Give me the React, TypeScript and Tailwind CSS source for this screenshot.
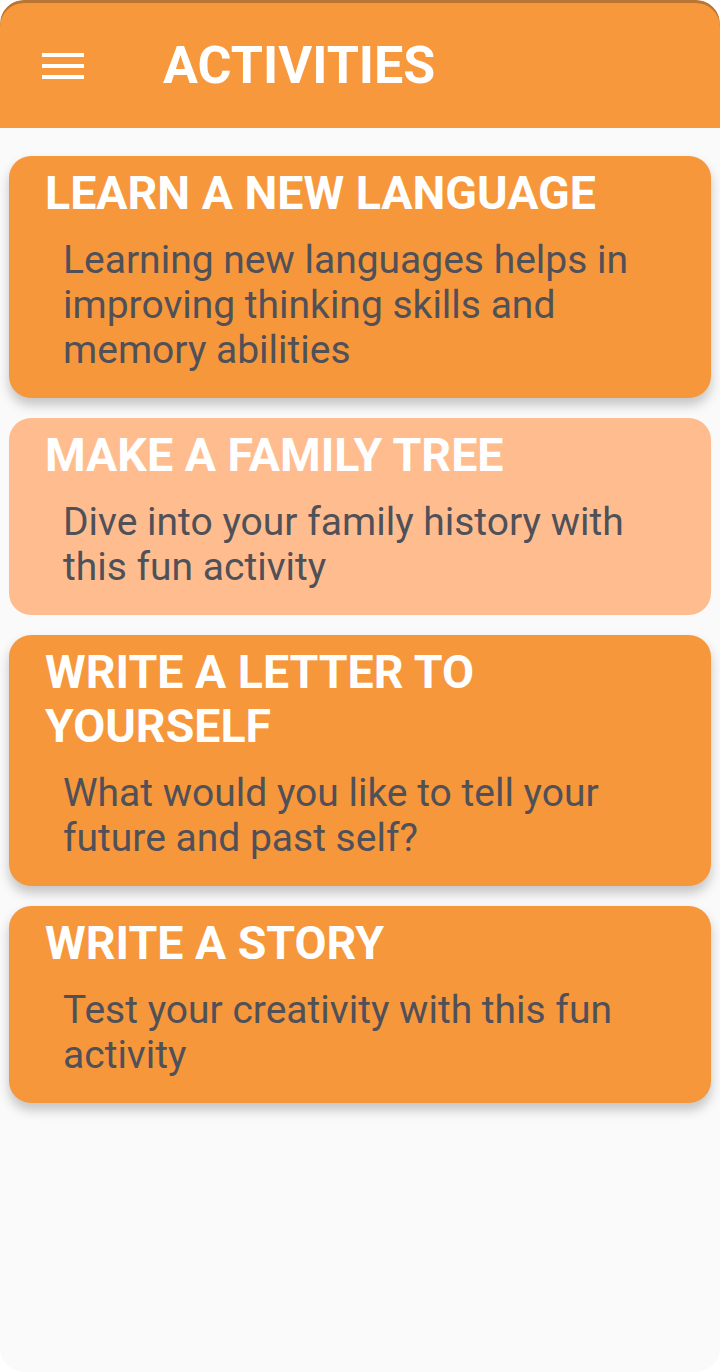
const activities = [
  {
    title: "LEARN A NEW LANGUAGE",
    text: "Learning new languages helps in improving thinking skills and memory abilities",
    light: false,
  },
  {
    title: "MAKE A FAMILY TREE",
    text: "Dive into your family history with this fun activity",
    light: true,
  },
  {
    title: "WRITE A LETTER TO YOURSELF",
    text: "What would you like to tell your future and past self?",
    light: false,
  },
  {
    title: "WRITE A STORY",
    text: "Test your creativity with this fun activity",
    light: false,
  },
];

function ActivityCard({ title, text, light }: { title: string; text: string; light: boolean }) {
  return (
    <div
      className={
        light
          ? "rounded-[22px] bg-[#ffbd8f] pt-[10px] pb-[25px] pl-[36px] pr-[30px]"
          : "rounded-[22px] bg-[#f7973b] pt-[10px] pb-[25px] pl-[36px] pr-[30px] shadow-[0_7px_12px_rgba(0,0,0,0.22)]"
      }
    >
      <h2 className="text-[46.5px] font-bold leading-[54px] text-white">{title}</h2>
      <p className="mt-[18px] pl-[18px] text-[39px] leading-[45px] text-[#505058]">{text}</p>
    </div>
  );
}

export default function App() {
  return (
    <div className="bg-white" style={{ fontFamily: "Roboto, 'Liberation Sans', sans-serif" }}>
      <div className="h-[1372px] overflow-hidden rounded-[24px] bg-[#fafafa]">
        <header className="flex h-[128px] items-start rounded-t-[24px] bg-[#f7983c] pt-[35px] shadow-[inset_0_3px_0_#b97533]">
          <button className="ml-[42px] mt-[18px] flex w-[42px] flex-col gap-[7px]">
            <span className="block h-[4px] w-full bg-white" />
            <span className="block h-[4px] w-full bg-white" />
            <span className="block h-[4px] w-full bg-white" />
          </button>
          <h1 className="ml-[79px] text-[52px] font-bold leading-[61px] text-white">ACTIVITIES</h1>
        </header>

        <main className="flex flex-col gap-[20px] px-[9px] pt-[28px]">
          {activities.map((a) => (
            <ActivityCard key={a.title} title={a.title} text={a.text} light={a.light} />
          ))}
        </main>
      </div>
    </div>
  );
}
